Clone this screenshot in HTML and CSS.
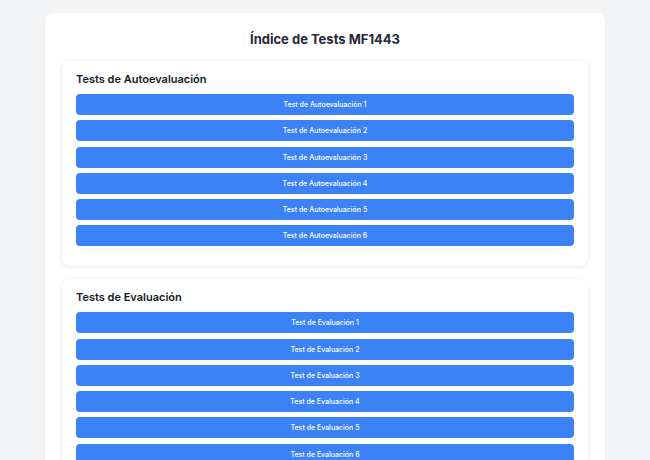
FILE: index.html
```html
<!DOCTYPE html>
<html lang="es">
<head>
<meta charset="utf-8">
<title>Índice de Tests MF1443</title>
<link rel="stylesheet" href="styles.css">
</head>
<body>
<main class="container">
  <h1 class="title">Índice de Tests MF1443</h1>
  <section class="group">
    <h2 class="group-title">Tests de Autoevaluación</h2>
    <div class="list">
      <a class="btn" href="#">Test de Autoevaluación 1</a>
      <a class="btn" href="#">Test de Autoevaluación 2</a>
      <a class="btn" href="#">Test de Autoevaluación 3</a>
      <a class="btn" href="#">Test de Autoevaluación 4</a>
      <a class="btn" href="#">Test de Autoevaluación 5</a>
      <a class="btn" href="#">Test de Autoevaluación 6</a>
    </div>
  </section>
  <section class="group">
    <h2 class="group-title">Tests de Evaluación</h2>
    <div class="list">
      <a class="btn" href="#">Test de Evaluación 1</a>
      <a class="btn" href="#">Test de Evaluación 2</a>
      <a class="btn" href="#">Test de Evaluación 3</a>
      <a class="btn" href="#">Test de Evaluación 4</a>
      <a class="btn" href="#">Test de Evaluación 5</a>
      <a class="btn" href="#">Test de Evaluación 6</a>
    </div>
  </section>
</main>
</body>
</html>
```
FILE: styles.css
```css
html, body {
  margin: 0;
  padding: 0;
  background: #f3f4f6;
  font-family: Inter, "Noto Sans", sans-serif;
  color: #1f2937;
}
.container {
  width: 560px;
  margin: 13px auto 0;
  background: #ffffff;
  border-radius: 8px;
  box-shadow: 0 1px 3px rgba(0,0,0,0.08);
  padding: 17px 17px 20px;
  box-sizing: border-box;
}
.title {
  margin: 0 0 13px;
  text-align: center;
  font-size: 13px;
  line-height: 18px;
  font-weight: 700;
  color: #1f2937;
}
.group {
  background: #ffffff;
  border-radius: 8px;
  box-shadow: 0 1px 4px rgba(0,0,0,0.1);
  padding: 11px 14px 20px;
  margin-bottom: 13px;
}
.group-title {
  margin: 0 0 7px;
  font-size: 11px;
  line-height: 15px;
  font-weight: 600;
  color: #111827;
}
.list {
  display: flex;
  flex-direction: column;
  gap: 5.25px;
}
.btn {
  display: flex;
  align-items: center;
  justify-content: center;
  height: 21px;
  background: #3b82f6;
  color: #ffffff;
  border-radius: 4px;
  font-size: 7px;
  font-weight: 500;
  text-decoration: none;
}
```
